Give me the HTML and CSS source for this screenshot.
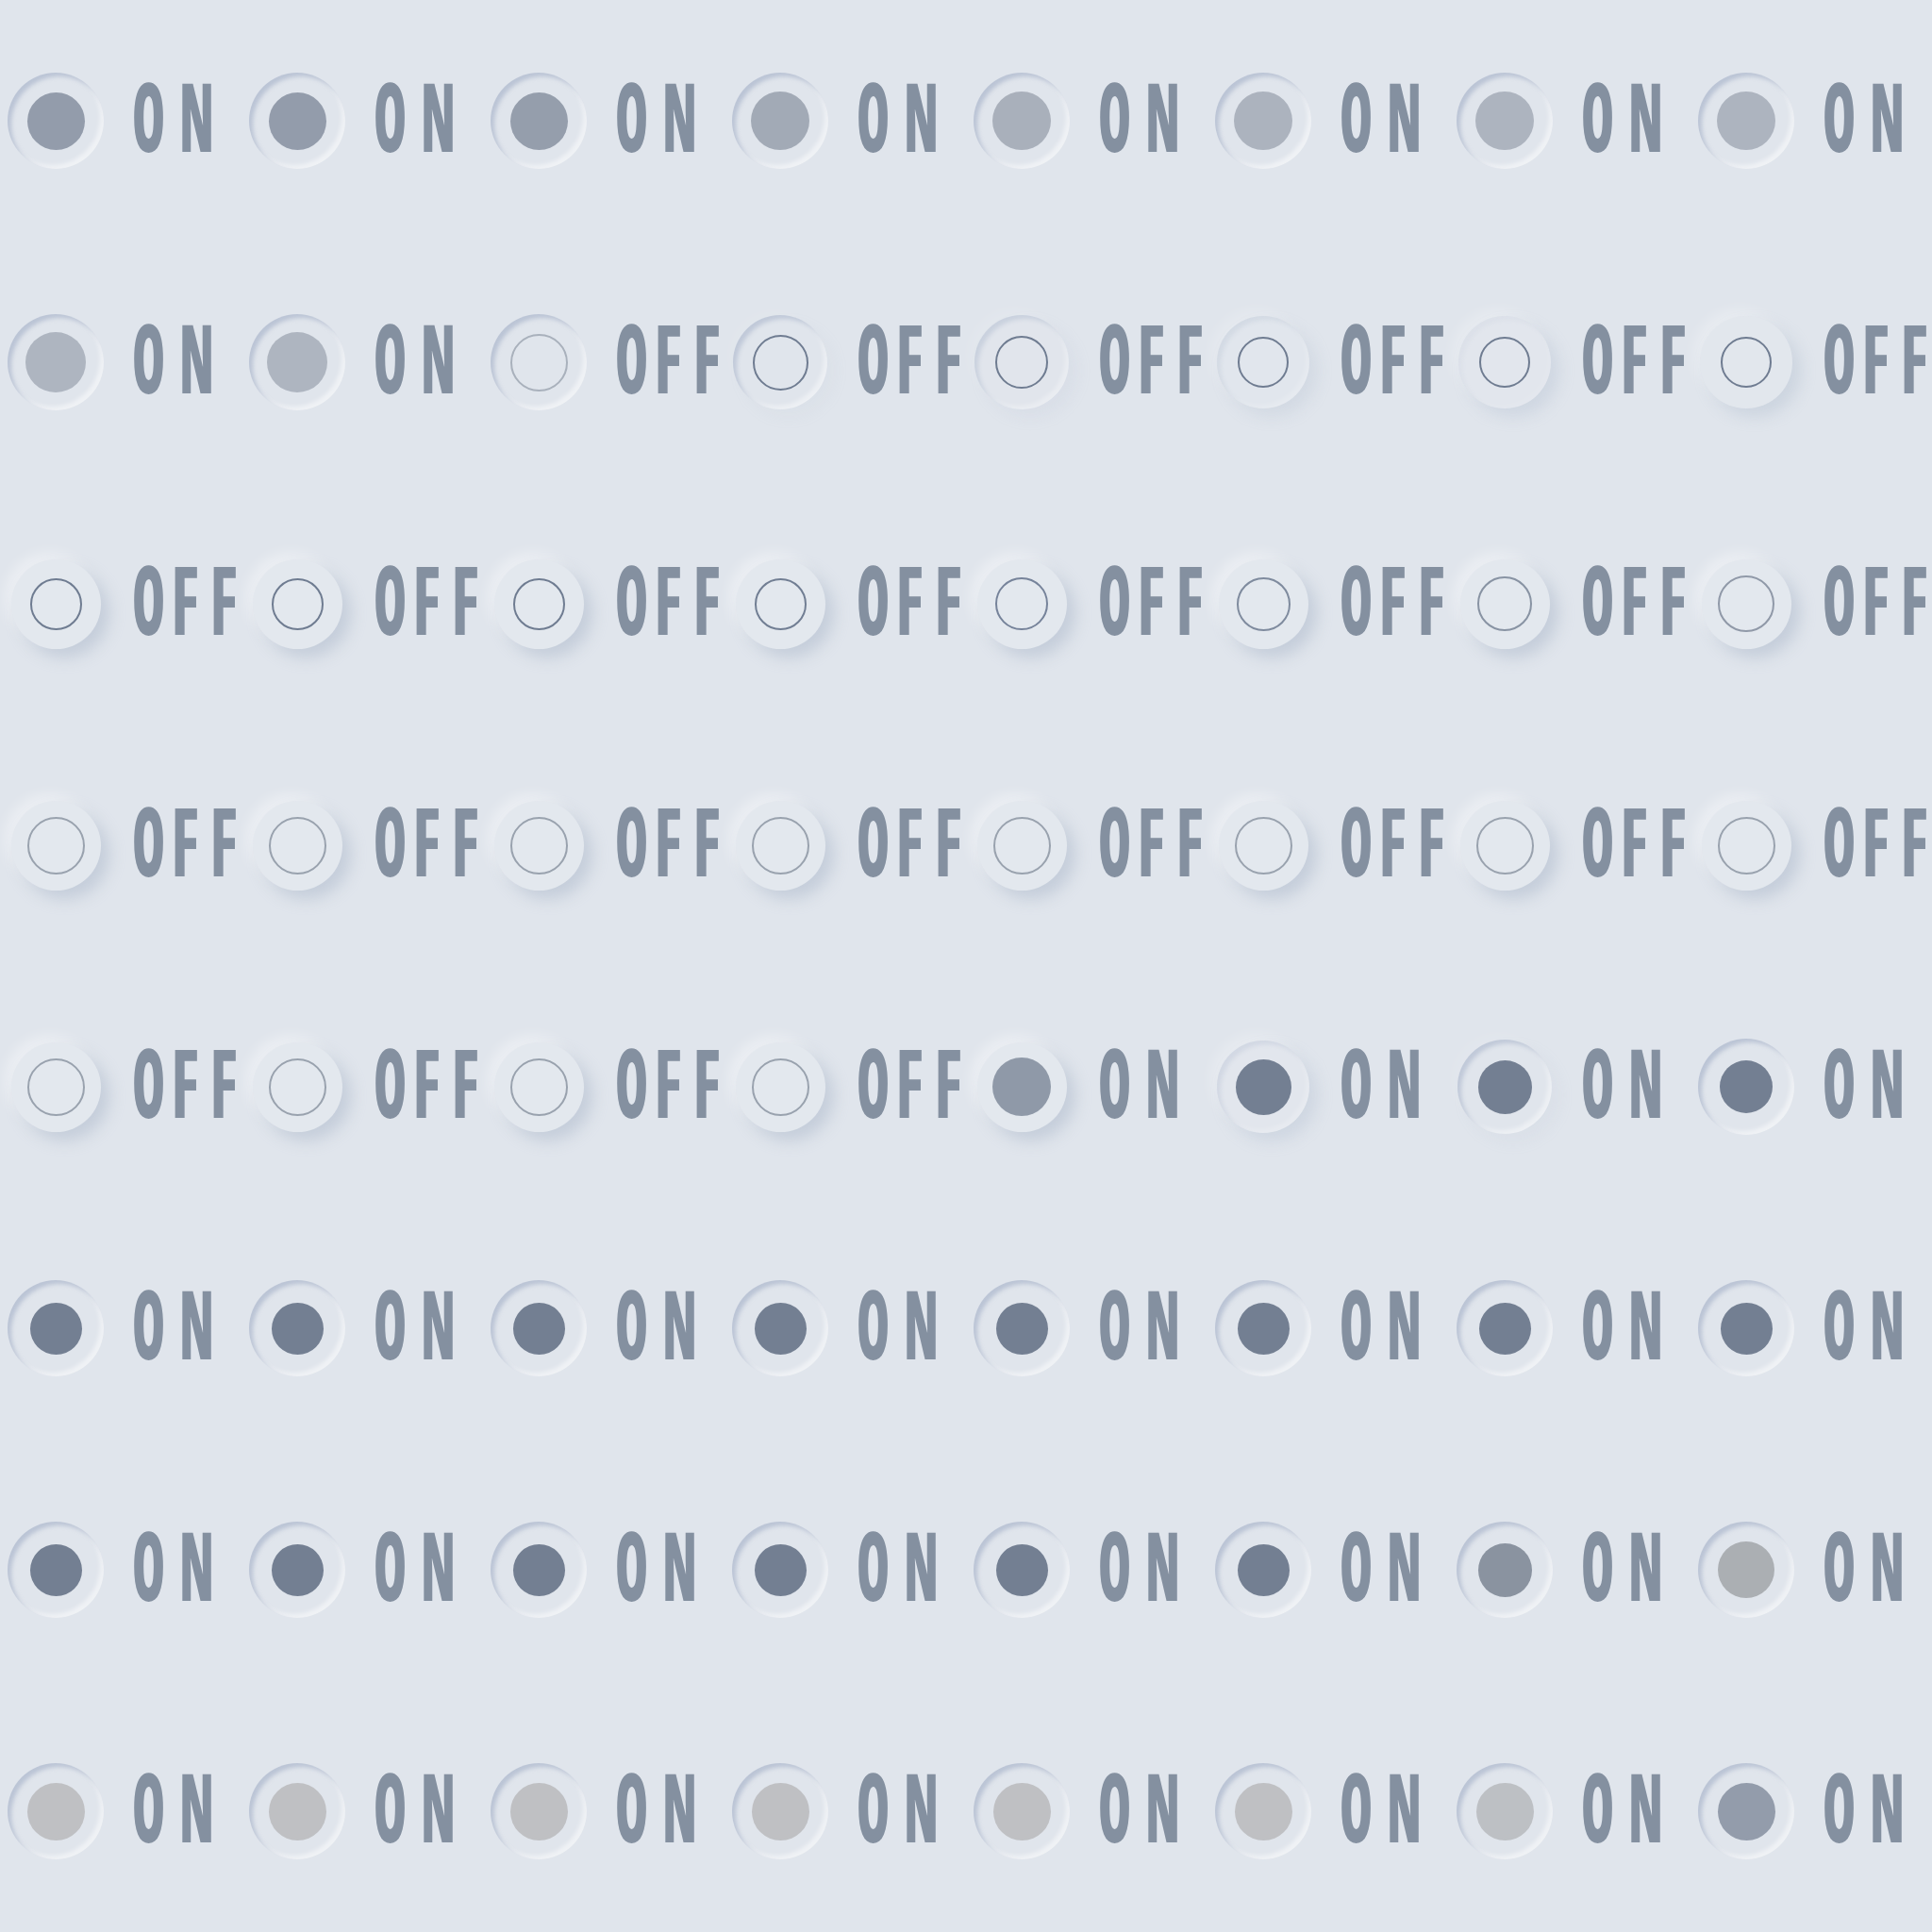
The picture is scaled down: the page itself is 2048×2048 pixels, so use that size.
FILE: index.html
```html
<!DOCTYPE html>
<html lang="en">
<head>
<meta charset="utf-8">
<title>Neumorphic toggles</title>
<link rel="stylesheet" href="styles.css">
</head>
<body>
<main class="grid">
<!-- row 1 -->
<div class="cell" style="--i:1;--r:0;--c:#939cab;--d:61px"><span class="knob"><span class="disk"></span><span class="dot fill"></span></span><span class="label"><span class="o on">O</span><span class="n">N</span></span></div>
<div class="cell" style="--i:1;--r:0;--c:#939cab;--d:61px"><span class="knob"><span class="disk"></span><span class="dot fill"></span></span><span class="label"><span class="o on">O</span><span class="n">N</span></span></div>
<div class="cell" style="--i:1;--r:0;--c:#959eac;--d:61px"><span class="knob"><span class="disk"></span><span class="dot fill"></span></span><span class="label"><span class="o on">O</span><span class="n">N</span></span></div>
<div class="cell" style="--i:1;--r:0;--c:#a2aab6;--d:62px"><span class="knob"><span class="disk"></span><span class="dot fill"></span></span><span class="label"><span class="o on">O</span><span class="n">N</span></span></div>
<div class="cell" style="--i:1;--r:0;--c:#a9b0bb;--d:62px"><span class="knob"><span class="disk"></span><span class="dot fill"></span></span><span class="label"><span class="o on">O</span><span class="n">N</span></span></div>
<div class="cell" style="--i:1;--r:0;--c:#acb3be;--d:62px"><span class="knob"><span class="disk"></span><span class="dot fill"></span></span><span class="label"><span class="o on">O</span><span class="n">N</span></span></div>
<div class="cell" style="--i:1;--r:0;--c:#adb4bf;--d:62px"><span class="knob"><span class="disk"></span><span class="dot fill"></span></span><span class="label"><span class="o on">O</span><span class="n">N</span></span></div>
<div class="cell" style="--i:1;--r:0;--c:#adb4bf;--d:62px"><span class="knob"><span class="disk"></span><span class="dot fill"></span></span><span class="label"><span class="o on">O</span><span class="n">N</span></span></div>
<!-- row 2 -->
<div class="cell" style="--i:1;--r:0;--c:#aeb5c0;--d:64px"><span class="knob"><span class="disk"></span><span class="dot fill"></span></span><span class="label"><span class="o on">O</span><span class="n">N</span></span></div>
<div class="cell" style="--i:1;--r:0;--c:#aeb5c0;--d:64px"><span class="knob"><span class="disk"></span><span class="dot fill"></span></span><span class="label"><span class="o on">O</span><span class="n">N</span></span></div>
<div class="cell" style="--i:1;--r:0;--c:#a9b1bc;--d:61px"><span class="knob"><span class="disk"></span><span class="dot line"></span></span><span class="label"><span class="o">O</span><span class="f">F</span><span class="f">F</span></span></div>
<div class="cell" style="--i:.85;--r:.15;--c:#6f7c91;--d:59px"><span class="knob"><span class="disk"></span><span class="dot line"></span></span><span class="label"><span class="o">O</span><span class="f">F</span><span class="f">F</span></span></div>
<div class="cell" style="--i:.6;--r:.25;--c:#6f7c91;--d:56px"><span class="knob"><span class="disk"></span><span class="dot line"></span></span><span class="label"><span class="o">O</span><span class="f">F</span><span class="f">F</span></span></div>
<div class="cell" style="--i:.35;--r:.45;--c:#6f7c91;--d:54px"><span class="knob"><span class="disk"></span><span class="dot line"></span></span><span class="label"><span class="o">O</span><span class="f">F</span><span class="f">F</span></span></div>
<div class="cell" style="--i:.15;--r:.6;--c:#6f7c91;--d:54px"><span class="knob"><span class="disk"></span><span class="dot line"></span></span><span class="label"><span class="o">O</span><span class="f">F</span><span class="f">F</span></span></div>
<div class="cell" style="--i:0;--r:.7;--c:#6f7c91;--d:54px"><span class="knob"><span class="disk"></span><span class="dot line"></span></span><span class="label"><span class="o">O</span><span class="f">F</span><span class="f">F</span></span></div>
<!-- row 3 -->
<div class="cell" style="--i:0;--r:1;--c:#6f7c91;--d:55px"><span class="knob"><span class="disk"></span><span class="dot line"></span></span><span class="label"><span class="o">O</span><span class="f">F</span><span class="f">F</span></span></div>
<div class="cell" style="--i:0;--r:1;--c:#6f7c91;--d:55px"><span class="knob"><span class="disk"></span><span class="dot line"></span></span><span class="label"><span class="o">O</span><span class="f">F</span><span class="f">F</span></span></div>
<div class="cell" style="--i:0;--r:1;--c:#6f7c91;--d:55px"><span class="knob"><span class="disk"></span><span class="dot line"></span></span><span class="label"><span class="o">O</span><span class="f">F</span><span class="f">F</span></span></div>
<div class="cell" style="--i:0;--r:1;--c:#717e93;--d:55px"><span class="knob"><span class="disk"></span><span class="dot line"></span></span><span class="label"><span class="o">O</span><span class="f">F</span><span class="f">F</span></span></div>
<div class="cell" style="--i:0;--r:1;--c:#76839a;--d:56px"><span class="knob"><span class="disk"></span><span class="dot line"></span></span><span class="label"><span class="o">O</span><span class="f">F</span><span class="f">F</span></span></div>
<div class="cell" style="--i:0;--r:1;--c:#7f8b9e;--d:57px"><span class="knob"><span class="disk"></span><span class="dot line"></span></span><span class="label"><span class="o">O</span><span class="f">F</span><span class="f">F</span></span></div>
<div class="cell" style="--i:0;--r:1;--c:#8893a3;--d:58px"><span class="knob"><span class="disk"></span><span class="dot line"></span></span><span class="label"><span class="o">O</span><span class="f">F</span><span class="f">F</span></span></div>
<div class="cell" style="--i:0;--r:1;--c:#9099a8;--d:60px"><span class="knob"><span class="disk"></span><span class="dot line"></span></span><span class="label"><span class="o">O</span><span class="f">F</span><span class="f">F</span></span></div>
<!-- row 4 -->
<div class="cell" style="--i:0;--r:1;--c:#99a2ae;--d:61px"><span class="knob"><span class="disk"></span><span class="dot line"></span></span><span class="label"><span class="o">O</span><span class="f">F</span><span class="f">F</span></span></div>
<div class="cell" style="--i:0;--r:1;--c:#99a2ae;--d:61px"><span class="knob"><span class="disk"></span><span class="dot line"></span></span><span class="label"><span class="o">O</span><span class="f">F</span><span class="f">F</span></span></div>
<div class="cell" style="--i:0;--r:1;--c:#99a2ae;--d:61px"><span class="knob"><span class="disk"></span><span class="dot line"></span></span><span class="label"><span class="o">O</span><span class="f">F</span><span class="f">F</span></span></div>
<div class="cell" style="--i:0;--r:1;--c:#99a2ae;--d:61px"><span class="knob"><span class="disk"></span><span class="dot line"></span></span><span class="label"><span class="o">O</span><span class="f">F</span><span class="f">F</span></span></div>
<div class="cell" style="--i:0;--r:1;--c:#99a2ae;--d:61px"><span class="knob"><span class="disk"></span><span class="dot line"></span></span><span class="label"><span class="o">O</span><span class="f">F</span><span class="f">F</span></span></div>
<div class="cell" style="--i:0;--r:1;--c:#99a2ae;--d:61px"><span class="knob"><span class="disk"></span><span class="dot line"></span></span><span class="label"><span class="o">O</span><span class="f">F</span><span class="f">F</span></span></div>
<div class="cell" style="--i:0;--r:1;--c:#99a2ae;--d:61px"><span class="knob"><span class="disk"></span><span class="dot line"></span></span><span class="label"><span class="o">O</span><span class="f">F</span><span class="f">F</span></span></div>
<div class="cell" style="--i:0;--r:1;--c:#99a2ae;--d:61px"><span class="knob"><span class="disk"></span><span class="dot line"></span></span><span class="label"><span class="o">O</span><span class="f">F</span><span class="f">F</span></span></div>
<!-- row 5 -->
<div class="cell" style="--i:0;--r:1;--c:#99a2ae;--d:61px"><span class="knob"><span class="disk"></span><span class="dot line"></span></span><span class="label"><span class="o">O</span><span class="f">F</span><span class="f">F</span></span></div>
<div class="cell" style="--i:0;--r:1;--c:#99a2ae;--d:61px"><span class="knob"><span class="disk"></span><span class="dot line"></span></span><span class="label"><span class="o">O</span><span class="f">F</span><span class="f">F</span></span></div>
<div class="cell" style="--i:0;--r:1;--c:#99a2ae;--d:61px"><span class="knob"><span class="disk"></span><span class="dot line"></span></span><span class="label"><span class="o">O</span><span class="f">F</span><span class="f">F</span></span></div>
<div class="cell" style="--i:0;--r:1;--c:#99a2ae;--d:61px"><span class="knob"><span class="disk"></span><span class="dot line"></span></span><span class="label"><span class="o">O</span><span class="f">F</span><span class="f">F</span></span></div>
<div class="cell" style="--i:0;--r:1;--c:#8f99a8;--d:62px"><span class="knob"><span class="disk"></span><span class="dot fill"></span></span><span class="label"><span class="o on">O</span><span class="n">N</span></span></div>
<div class="cell" style="--i:.4;--r:.6;--c:#737f92;--d:59px"><span class="knob"><span class="disk"></span><span class="dot fill"></span></span><span class="label"><span class="o on">O</span><span class="n">N</span></span></div>
<div class="cell" style="--i:.85;--r:.2;--c:#737f92;--d:57px"><span class="knob"><span class="disk"></span><span class="dot fill"></span></span><span class="label"><span class="o on">O</span><span class="n">N</span></span></div>
<div class="cell" style="--i:1;--r:0;--c:#737f92;--d:56px"><span class="knob"><span class="disk"></span><span class="dot fill"></span></span><span class="label"><span class="o on">O</span><span class="n">N</span></span></div>
<!-- row 6 -->
<div class="cell" style="--i:1;--r:0;--c:#737f92;--d:55px"><span class="knob"><span class="disk"></span><span class="dot fill"></span></span><span class="label"><span class="o on">O</span><span class="n">N</span></span></div>
<div class="cell" style="--i:1;--r:0;--c:#737f92;--d:55px"><span class="knob"><span class="disk"></span><span class="dot fill"></span></span><span class="label"><span class="o on">O</span><span class="n">N</span></span></div>
<div class="cell" style="--i:1;--r:0;--c:#737f92;--d:55px"><span class="knob"><span class="disk"></span><span class="dot fill"></span></span><span class="label"><span class="o on">O</span><span class="n">N</span></span></div>
<div class="cell" style="--i:1;--r:0;--c:#737f92;--d:55px"><span class="knob"><span class="disk"></span><span class="dot fill"></span></span><span class="label"><span class="o on">O</span><span class="n">N</span></span></div>
<div class="cell" style="--i:1;--r:0;--c:#737f92;--d:55px"><span class="knob"><span class="disk"></span><span class="dot fill"></span></span><span class="label"><span class="o on">O</span><span class="n">N</span></span></div>
<div class="cell" style="--i:1;--r:0;--c:#737f92;--d:55px"><span class="knob"><span class="disk"></span><span class="dot fill"></span></span><span class="label"><span class="o on">O</span><span class="n">N</span></span></div>
<div class="cell" style="--i:1;--r:0;--c:#737f92;--d:55px"><span class="knob"><span class="disk"></span><span class="dot fill"></span></span><span class="label"><span class="o on">O</span><span class="n">N</span></span></div>
<div class="cell" style="--i:1;--r:0;--c:#737f92;--d:55px"><span class="knob"><span class="disk"></span><span class="dot fill"></span></span><span class="label"><span class="o on">O</span><span class="n">N</span></span></div>
<!-- row 7 -->
<div class="cell" style="--i:1;--r:0;--c:#737f92;--d:55px"><span class="knob"><span class="disk"></span><span class="dot fill"></span></span><span class="label"><span class="o on">O</span><span class="n">N</span></span></div>
<div class="cell" style="--i:1;--r:0;--c:#737f92;--d:55px"><span class="knob"><span class="disk"></span><span class="dot fill"></span></span><span class="label"><span class="o on">O</span><span class="n">N</span></span></div>
<div class="cell" style="--i:1;--r:0;--c:#737f92;--d:55px"><span class="knob"><span class="disk"></span><span class="dot fill"></span></span><span class="label"><span class="o on">O</span><span class="n">N</span></span></div>
<div class="cell" style="--i:1;--r:0;--c:#737f92;--d:55px"><span class="knob"><span class="disk"></span><span class="dot fill"></span></span><span class="label"><span class="o on">O</span><span class="n">N</span></span></div>
<div class="cell" style="--i:1;--r:0;--c:#737f92;--d:55px"><span class="knob"><span class="disk"></span><span class="dot fill"></span></span><span class="label"><span class="o on">O</span><span class="n">N</span></span></div>
<div class="cell" style="--i:1;--r:0;--c:#737f92;--d:55px"><span class="knob"><span class="disk"></span><span class="dot fill"></span></span><span class="label"><span class="o on">O</span><span class="n">N</span></span></div>
<div class="cell" style="--i:1;--r:0;--c:#8a93a0;--d:57px"><span class="knob"><span class="disk"></span><span class="dot fill"></span></span><span class="label"><span class="o on">O</span><span class="n">N</span></span></div>
<div class="cell" style="--i:1;--r:0;--c:#abafb3;--d:60px"><span class="knob"><span class="disk"></span><span class="dot fill"></span></span><span class="label"><span class="o on">O</span><span class="n">N</span></span></div>
<!-- row 8 -->
<div class="cell" style="--i:1;--r:0;--c:#bfc0c3;--d:61px"><span class="knob"><span class="disk"></span><span class="dot fill"></span></span><span class="label"><span class="o on">O</span><span class="n">N</span></span></div>
<div class="cell" style="--i:1;--r:0;--c:#bfc0c3;--d:61px"><span class="knob"><span class="disk"></span><span class="dot fill"></span></span><span class="label"><span class="o on">O</span><span class="n">N</span></span></div>
<div class="cell" style="--i:1;--r:0;--c:#bfc0c3;--d:61px"><span class="knob"><span class="disk"></span><span class="dot fill"></span></span><span class="label"><span class="o on">O</span><span class="n">N</span></span></div>
<div class="cell" style="--i:1;--r:0;--c:#bfc0c3;--d:61px"><span class="knob"><span class="disk"></span><span class="dot fill"></span></span><span class="label"><span class="o on">O</span><span class="n">N</span></span></div>
<div class="cell" style="--i:1;--r:0;--c:#bfc0c3;--d:61px"><span class="knob"><span class="disk"></span><span class="dot fill"></span></span><span class="label"><span class="o on">O</span><span class="n">N</span></span></div>
<div class="cell" style="--i:1;--r:0;--c:#bfc0c3;--d:61px"><span class="knob"><span class="disk"></span><span class="dot fill"></span></span><span class="label"><span class="o on">O</span><span class="n">N</span></span></div>
<div class="cell" style="--i:1;--r:0;--c:#bdc0c4;--d:61px"><span class="knob"><span class="disk"></span><span class="dot fill"></span></span><span class="label"><span class="o on">O</span><span class="n">N</span></span></div>
<div class="cell" style="--i:1;--r:0;--c:#939cab;--d:61px"><span class="knob"><span class="disk"></span><span class="dot fill"></span></span><span class="label"><span class="o on">O</span><span class="n">N</span></span></div>
</main>
</body>
</html>
```
FILE: styles.css
```css
html, body {
  margin: 0;
  padding: 0;
  background: #e0e5ec;
}

.grid {
  display: grid;
  grid-template-columns: repeat(8, 256px);
  grid-template-rows: repeat(8, 256px);
  width: 2048px;
  height: 2048px;
  overflow: hidden;
}

.cell {
  display: flex;
  align-items: center;
  padding-left: 8px;
  box-sizing: border-box;
}

.knob {
  flex: none;
  width: 102px;
  height: 102px;
  display: grid;
  place-items: center;
}

.disk,
.dot {
  grid-area: 1 / 1;
  border-radius: 50%;
  box-sizing: border-box;
}

.disk {
  width: calc(102px - 7px * var(--r));
  height: calc(102px - 7px * var(--r));
  background: rgba(255, 255, 255, calc(0.12 * var(--r)));
  box-shadow:
    inset 4px 4px 4px rgba(156, 170, 194, calc(0.55 * var(--i))),
    inset -4px -4px 4px rgba(255, 255, 255, calc(0.5 * var(--i))),
    9px 9px 16px rgba(163, 177, 198, calc(0.45 * var(--r))),
    -7px -7px 14px rgba(255, 255, 255, calc(0.4 * var(--r)));
}

.dot {
  width: var(--d);
  height: var(--d);
}

.dot.fill {
  background: var(--c);
}

.dot.line {
  border: 2px solid var(--c);
}

.label {
  display: flex;
  margin-left: 30px;
  padding-bottom: 12px;
  font-family: "Open Sans", "Roboto", sans-serif;
  font-stretch: 75%;
  font-size: 101px;
  line-height: 101px;
  color: #8490a0;
}

.label span {
  flex: none;
  display: block;
  transform-origin: 0 50%;
  white-space: nowrap;
}

.o {
  width: 41px;
  font-weight: 800;
  transform: scaleX(0.56);
}

.o.on {
  width: 50px;
}

.n {
  width: 40px;
  font-weight: 800;
  transform: scaleX(0.56);
}

.f {
  width: 41px;
  font-weight: 700;
  transform: scaleX(0.72);
}
```
